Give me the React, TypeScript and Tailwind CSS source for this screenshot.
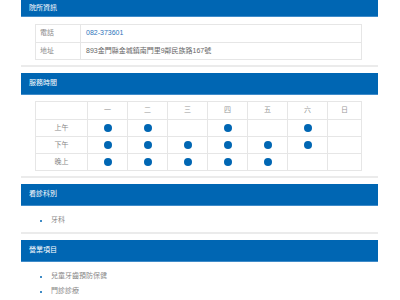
import React from "react";

const font = { fontFamily: '"Liberation Sans", "Noto Sans CJK TC", sans-serif' };

function Panel({ title, children, first }: { title: string; children: React.ReactNode; first?: boolean }) {
  return (
    <div className="border-b-2 border-[#ebebeb] mb-[6px]">
      <div
        className={`${first ? "h-[17px]" : "h-[22px]"} bg-[#0066b3] border-b border-[#3f8bc9] flex items-center pl-[8px] text-[7px] text-white`}
      >
        {title}
      </div>
      {children}
    </div>
  );
}

const days = ["一", "二", "三", "四", "五", "六", "日"];
const rows: { label: string; on: boolean[] }[] = [
  { label: "上午", on: [true, true, false, true, false, true, false] },
  { label: "下午", on: [true, true, true, true, true, true, false] },
  { label: "晚上", on: [true, true, true, true, true, false, false] },
];

const gridCols = "grid grid-cols-[52px_40px_40px_40px_40px_40px_40px_1fr]";

function Bullet() {
  return <span className="w-[2px] h-[2px] rounded-full bg-[#0066b3] mr-[9px]" />;
}

export default function App() {
  return (
    <div className="bg-white w-[400px] h-[300px] overflow-hidden" style={font}>
      <div className="ml-[21px] w-[357px]">
        <Panel title="院所資訊" first>
          <div className="pt-[7px] pb-[5px] pl-[14px] pr-[16px]">
            <div className="border border-[#e6e6e6] text-[7px]">
              <div className="grid grid-cols-[45px_1fr] h-[17px]">
                <div className="border-r border-[#e6e6e6] flex items-center pl-[4px] text-[#888]">電話</div>
                <div className="flex items-center pl-[5px] text-[#2f74bb]">082-373601</div>
              </div>
              <div className="grid grid-cols-[45px_1fr] h-[17px] border-t border-[#e6e6e6]">
                <div className="border-r border-[#e6e6e6] flex items-center pl-[4px] text-[#888]">地址</div>
                <div className="flex items-center pl-[5px] text-[#666]">893金門縣金城鎮南門里9鄰民族路167號</div>
              </div>
            </div>
          </div>
        </Panel>

        <Panel title="服務時間">
          <div className="pt-[6px] pb-[5px] pl-[14px] pr-[16px]">
            <div className="border border-[#e6e6e6] text-[7px]">
              <div className={`${gridCols} h-[17px]`}>
                <div className="border-r border-[#e6e6e6]" />
                {days.map((d, i) => (
                  <div
                    key={d}
                    className={`flex items-center justify-center text-[#999] ${i < 6 ? "border-r border-[#e6e6e6]" : ""}`}
                  >
                    {d}
                  </div>
                ))}
              </div>
              {rows.map((r) => (
                <div key={r.label} className={`${gridCols} h-[17px] border-t border-[#e6e6e6]`}>
                  <div className="border-r border-[#e6e6e6] flex items-center justify-center text-[#888]">{r.label}</div>
                  {r.on.map((on, i) => (
                    <div
                      key={i}
                      className={`flex items-center justify-center ${i < 6 ? "border-r border-[#e6e6e6]" : ""}`}
                    >
                      {on && <div className="w-[8px] h-[8px] rounded-full bg-[#0066b3]" />}
                    </div>
                  ))}
                </div>
              ))}
            </div>
          </div>
        </Panel>

        <Panel title="看診科別">
          <ul className="pt-[7px] pb-[4px] pl-[19px] text-[7px] text-[#888]">
            <li className="h-[15px] flex items-center">
              <Bullet />
              牙科
            </li>
          </ul>
        </Panel>

        <Panel title="營業項目">
          <ul className="pt-[7px] pb-[5px] pl-[19px] text-[7px] text-[#888]">
            <li className="h-[15px] flex items-center">
              <Bullet />
              兒童牙齒預防保健
            </li>
            <li className="h-[15px] flex items-center">
              <Bullet />
              門診診療
            </li>
          </ul>
        </Panel>
      </div>
    </div>
  );
}
